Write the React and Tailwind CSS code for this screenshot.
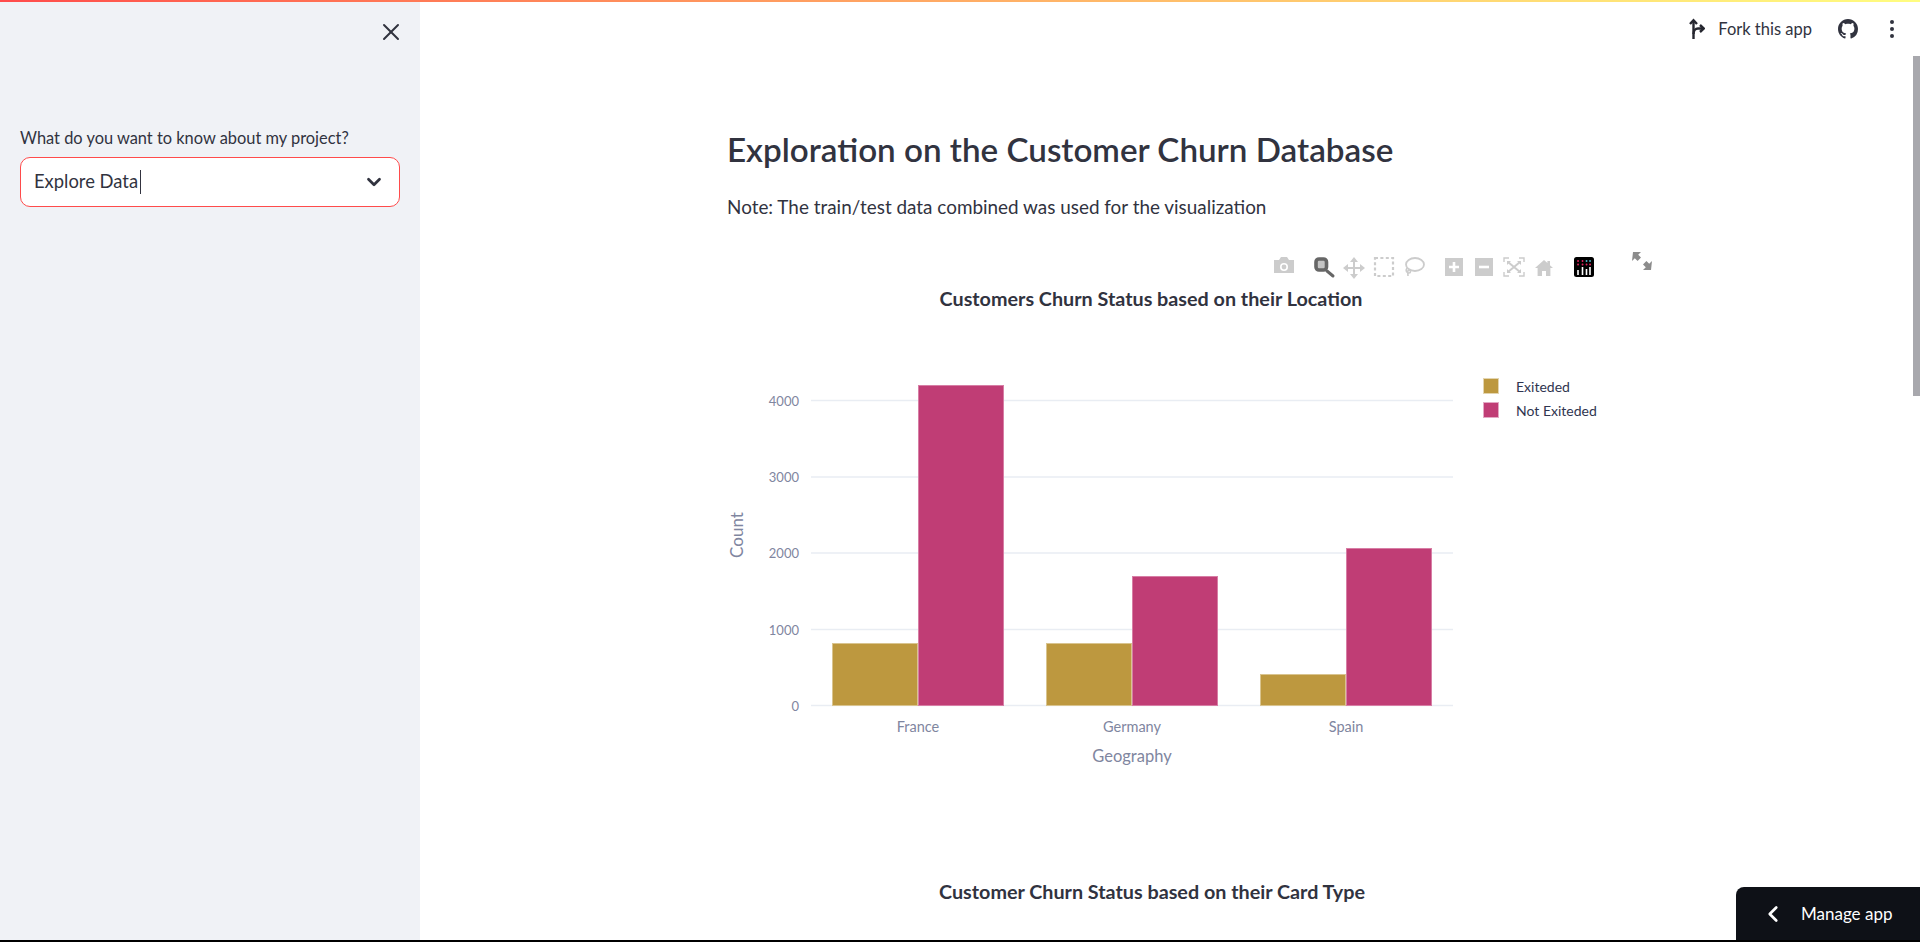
import React from 'react';
import { X, ChevronDown, ChevronLeft } from 'lucide-react';

const GRID_Y = [400.5, 477, 553, 629.5, 705.5];
const TICKS = ['4000', '3000', '2000', '1000', '0'];

const BARS = [
  { label: 'France', x: 832, goldTop: 643, pinkTop: 385 },
  { label: 'Germany', x: 1046, goldTop: 643, pinkTop: 576 },
  { label: 'Spain', x: 1260, goldTop: 674, pinkTop: 548 },
];

function Bar({ x, top, fill, edge }) {
  return <rect x={x + 0.5} y={top + 0.5} width={85} height={705 - top} fill={fill} stroke={edge} strokeWidth="1" />;
}

/* modebar icons, drawn in page coordinates */
function ModeBar() {
  return (
    <g>
      {/* camera */}
      <path d="M1274 260h5l2-3h6l2 3h5v13h-20z" fill="#cccccc" />
      <circle cx="1284" cy="267" r="4" fill="#ffffff" />
      <circle cx="1284" cy="267" r="2.4" fill="#cccccc" />
      {/* zoom */}
      <rect x="1316" y="259" width="10.500" height="11" rx="3" fill="#c4c4c4" stroke="#666666" strokeWidth="3.600" />
      <path d="M1327 271l6 5" stroke="#666666" strokeWidth="3" strokeLinecap="round" />
      {/* pan */}
      <path d="M1354 257l4 5h-3v5h5v-3l5 4-5 4v-3h-5v5h3l-4 5-4-5h3v-5h-5v3l-5-4 5-4v3h5v-5h-3z" fill="#cccccc" />
      {/* box select */}
      <rect x="1375" y="258" width="18" height="18" fill="none" stroke="#cccccc" strokeWidth="2.2" strokeDasharray="3 2.4" />
      {/* lasso */}
      <ellipse cx="1415" cy="264.5" rx="9" ry="6.5" fill="none" stroke="#cccccc" strokeWidth="1.8" />
      <path d="M1407 268c-2 3 0 5 2 5s2-3 0-3-1 4-1 6" fill="none" stroke="#cccccc" strokeWidth="1.6" />
      {/* zoom in */}
      <rect x="1445" y="258" width="18" height="18" fill="#cccccc" />
      <path d="M1449 267h10M1454 262v10" stroke="#ffffff" strokeWidth="2.6" />
      {/* zoom out */}
      <rect x="1475" y="258" width="18" height="18" fill="#cccccc" />
      <path d="M1479 267h10" stroke="#ffffff" strokeWidth="2.6" />
      {/* autoscale */}
      <path d="M1504 262v-4h5M1519 258h5v4M1524 272v4h-5M1509 276h-5v-4" fill="none" stroke="#cccccc" strokeWidth="1.4" />
      <path d="M1508 262l12 10M1520 262l-12 10" stroke="#cccccc" strokeWidth="2" />
      <path d="M1507 261h4l-4 4zM1521 261v4l-4-4zM1507 273v-4l4 4zM1521 273h-4l4-4z" fill="#cccccc" />
      {/* reset */}
      <path d="M1544 260l-9 8h2.6v8h4.4v-5h4v5h4.4v-8h2.6l-3-2.7v-4.3h-2.6v2z" fill="#cccccc" />
      {/* plotly logo */}
      <rect x="1574" y="257" width="20" height="20" rx="2.5" fill="#000000" />
      <path d="M1578 270v5M1582.500 267v8M1586.500 269v6M1590 267v8" stroke="#ffffff" strokeWidth="1.6" />
      <path d="M1578 261h.1M1582.500 261h.1" stroke="#e0245e" strokeWidth="1.8" strokeLinecap="round" />
      <path d="M1586.500 261h.1M1590 261h.1" stroke="#4fb3c8" strokeWidth="1.8" strokeLinecap="round" />
      <path d="M1578 264.500h.1M1582.500 264.500h.1M1586.500 264.500h.1M1590 264.500h.1" stroke="#e0245e" strokeWidth="1.8" strokeLinecap="round" />
      {/* fullscreen arrows */}
      <path d="M1633 252h8l-2.800 2.800 2.800 2.800-3.400 3.400-2.800-2.800-2.800 2.800z" fill="#8c8c8c" />
      <path d="M1651 270h-8l2.800-2.800-2.800-2.800 3.400-3.400 2.800 2.800 2.800-2.800z" fill="#8c8c8c" />
    </g>
  );
}

function ChurnChart() {
  return (
    <svg viewBox="727 248 940 602" className="block w-[940px] h-[602px]" style={{ fontFamily: 'Lato, sans-serif' }}>
      <ModeBar />
      <text x="1151" y="306" textAnchor="middle" fontSize="19.750" fontWeight="700" fill="#31333f">
        Customers Churn Status based on their Location
      </text>
      {GRID_Y.map((y, i) => (
        <g key={y}>
          <line x1="811" x2="1453" y1={y} y2={y} stroke="#e9edf3" strokeWidth="1.400" />
          <text x="799" y={y + 5} textAnchor="end" fontSize="13" fill="#7f86a0">{TICKS[i]}</text>
        </g>
      ))}
      {BARS.map((b) => (
        <g key={b.label}>
          <Bar x={b.x} top={b.goldTop} fill="#bd983f" edge="#d9c48f" />
          <Bar x={b.x + 86} top={b.pinkTop} fill="#c03d75" edge="#d77ea5" />
          <text x={b.x + 86} y="732" textAnchor="middle" fontSize="14.500" fill="#7f86a0">{b.label}</text>
        </g>
      ))}
      <text transform="translate(743 535) rotate(-90)" textAnchor="middle" fontSize="17" fill="#7f86a0">Count</text>
      <text x="1132" y="762" textAnchor="middle" fontSize="16.500" fill="#7f86a0">Geography</text>
      <rect x="1483.500" y="378.500" width="15" height="15" fill="#bd983f" stroke="#e3d5b0" />
      <rect x="1483.500" y="402.500" width="15" height="15" fill="#c03d75" stroke="#e3a9c4" />
      <text x="1516" y="391.500" fontSize="14" fill="#2f3550">Exiteded</text>
      <text x="1516" y="415.500" fontSize="14" fill="#2f3550">Not Exiteded</text>
    </svg>
  );
}

function GithubMark() {
  return (
    <svg viewBox="0 0 16 16" className="w-5 h-5" fill="#31333f">
      <path d="M8 0C3.58 0 0 3.58 0 8c0 3.54 2.29 6.53 5.47 7.59.4.07.55-.17.55-.38 0-.19-.01-.82-.01-1.49-2.01.37-2.53-.49-2.69-.94-.09-.23-.48-.94-.82-1.13-.28-.15-.68-.52-.01-.53.63-.01 1.08.58 1.23.82.72 1.21 1.87.87 2.33.66.07-.52.28-.87.51-1.07-1.78-.2-3.64-.89-3.64-3.95 0-.87.31-1.59.82-2.15-.08-.2-.36-1.02.08-2.12 0 0 .67-.21 2.2.82.64-.18 1.32-.27 2-.27s1.36.09 2 .27c1.53-1.04 2.2-.82 2.2-.82.44 1.1.16 1.92.08 2.12.51.56.82 1.27.82 2.15 0 3.07-1.87 3.75-3.65 3.95.29.25.54.73.54 1.48 0 1.07-.01 1.93-.01 2.2 0 .21.15.46.55.38A8.01 8.01 0 0 0 16 8c0-4.42-3.58-8-8-8z" />
    </svg>
  );
}

function ForkIcon() {
  return (
    <svg viewBox="0 0 16 22" className="w-4 h-[22px]" fill="none" stroke="#262730" strokeWidth="2.400">
      <path d="M4.500 21V2.500" />
      <path d="M1 6 4.500 2.200 8 6" />
      <path d="M4.500 16c0-3.500 2-5.500 4.500-5.500h5.500" />
      <path d="M11 7 14.800 10.500 11 14" />
    </svg>
  );
}

export default function App() {
  return (
    <div className="relative flex h-screen flex-col overflow-hidden bg-white font-['Lato',sans-serif] text-[#31333f]">
      <div className="h-[2px] shrink-0 bg-gradient-to-r from-[#ff4b4b] to-[#fffd80]" />

      <div className="flex min-h-0 flex-1">
        {/* sidebar */}
        <aside className="w-[420px] shrink-0 bg-[#f0f2f6] px-5">
          <div className="flex justify-end pt-4 mr-[-5px]">
            <X className="h-7 w-7 text-[#31333f]" strokeWidth={1.7} />
          </div>
          <p className="mt-[81px] text-[16.400px] leading-[21px]">What do you want to know about my project?</p>
          <div className="mt-[9px] flex h-[50px] items-center justify-between rounded-[10px] border border-[#ff4b4b] bg-white pl-[13px] pr-[14px]">
            <span className="flex items-center text-[18.400px]">
              Explore Data
              <span className="ml-[2px] h-[24px] w-px bg-[#31333f]" />
            </span>
            <ChevronDown className="h-[22px] w-[22px]" strokeWidth={3} />
          </div>
        </aside>

        {/* main */}
        <main className="relative min-w-0 flex-1">
          <header className="flex items-center justify-end pt-[16px] pr-[26px]">
            <ForkIcon />
            <span className="ml-[13px] text-[16.500px] leading-[22px]">Fork this app</span>
            <span className="ml-[26px]"><GithubMark /></span>
            <span className="ml-[32px] flex flex-col gap-[3px]">
              <span className="h-1 w-1 rounded-full bg-[#31333f]" />
              <span className="h-1 w-1 rounded-full bg-[#31333f]" />
              <span className="h-1 w-1 rounded-full bg-[#31333f]" />
            </span>
          </header>

          <div className="pl-[307px]">
            <h1 className="mt-[87px] text-[33.200px] font-semibold leading-[44px] text-[#31333f]">
              Exploration on the Customer Churn Database
            </h1>
            <p className="mt-[21px] text-[18.900px] leading-[30px]">
              Note: The train/test data combined was used for the visualization
            </p>
            <div className="mt-[26px]">
              <ChurnChart />
            </div>
            <p className="mt-[31px] w-[850px] text-center text-[19.750px] font-bold leading-[22px] text-[#31333f]">
              Customer Churn Status based on their Card Type
            </p>
          </div>

          {/* scrollbar thumb */}
          <div className="absolute right-0 top-[54px] h-[340px] w-[7px] bg-[#a8a8ad]" />
        </main>
      </div>

      <div className="h-[2px] shrink-0 bg-black" />

      {/* manage app tab */}
      <div className="absolute bottom-[2px] right-0 flex h-[53px] w-[184px] items-center rounded-tl-lg bg-[#0e1117] pl-[24px] text-white">
        <ChevronLeft className="h-[26px] w-[26px]" strokeWidth={2.5} />
        <span className="ml-[15px] text-[17px]">Manage app</span>
      </div>
    </div>
  );
}
